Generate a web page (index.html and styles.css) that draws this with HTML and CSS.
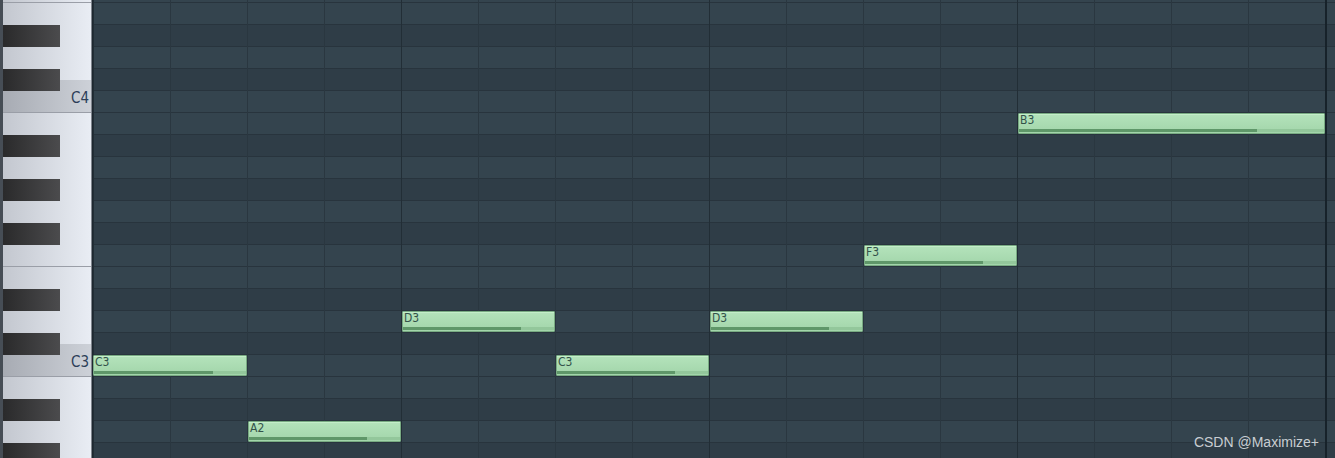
FILE: index.html
```html
<!DOCTYPE html>
<html lang="en">
<head>
  <meta charset="UTF-8">
  <meta name="viewport" content="width=device-width, initial-scale=1.0">
  <title>Piano Roll</title>
  <link rel="stylesheet" href="styles.css">
</head>
<body>
  <div class="roll">
    <!-- keyboard, F4 at the top down to G#2 -->
    <div class="keys">
      <div class="key edge"></div>
      <div class="key"></div>
      <div class="key black"><span class="bk"></span></div>
      <div class="key"></div>
      <div class="key black cs"><span class="bk"></span></div>
      <div class="key c edge"><span class="label">C4</span></div>
      <div class="key"></div>
      <div class="key black"><span class="bk"></span></div>
      <div class="key"></div>
      <div class="key black"><span class="bk"></span></div>
      <div class="key"></div>
      <div class="key black"><span class="bk"></span></div>
      <div class="key edge"></div>
      <div class="key"></div>
      <div class="key black"><span class="bk"></span></div>
      <div class="key"></div>
      <div class="key black cs"><span class="bk"></span></div>
      <div class="key c edge"><span class="label">C3</span></div>
      <div class="key"></div>
      <div class="key black"><span class="bk"></span></div>
      <div class="key"></div>
      <div class="key black"><span class="bk"></span></div>
    </div>

    <div class="canvas">
      <div class="rows">
        <div class="row"></div>
        <div class="row"></div>
        <div class="row dark"></div>
        <div class="row"></div>
        <div class="row dark"></div>
        <div class="row"></div>
        <div class="row"></div>
        <div class="row dark"></div>
        <div class="row"></div>
        <div class="row dark"></div>
        <div class="row"></div>
        <div class="row dark"></div>
        <div class="row"></div>
        <div class="row"></div>
        <div class="row dark"></div>
        <div class="row"></div>
        <div class="row dark"></div>
        <div class="row"></div>
        <div class="row"></div>
        <div class="row dark"></div>
        <div class="row"></div>
        <div class="row dark"></div>
      </div>

      <!-- grid-area: pitch row / start beat / span 1 / length in beats -->
      <div class="notes">
        <div class="note first" style="grid-area: 18 / 1 / span 1 / span 2"><span class="name">C3</span><span class="vel"></span></div>
        <div class="note" style="grid-area: 21 / 3 / span 1 / span 2"><span class="name">A2</span><span class="vel"></span></div>
        <div class="note" style="grid-area: 16 / 5 / span 1 / span 2"><span class="name">D3</span><span class="vel"></span></div>
        <div class="note" style="grid-area: 18 / 7 / span 1 / span 2"><span class="name">C3</span><span class="vel"></span></div>
        <div class="note" style="grid-area: 16 / 9 / span 1 / span 2"><span class="name">D3</span><span class="vel"></span></div>
        <div class="note" style="grid-area: 13 / 11 / span 1 / span 2"><span class="name">F3</span><span class="vel"></span></div>
        <div class="note" style="grid-area: 7 / 13 / span 1 / span 4"><span class="name">B3</span><span class="vel"></span></div>
      </div>
    </div>
  </div>

  <div class="watermark">CSDN @Maximize+</div>
</body>
</html>
```

FILE: styles.css
```css
body {
  margin: 0;
  height: 458px;
  overflow: hidden;
  background: #34444e;
  font-family: "Liberation Sans", Arial, sans-serif;
}
.roll {
  display: flex;
  margin-top: -19px;
}

/* keyboard */
.keys {
  flex: none;
  width: 88px;
  border-left: 3px solid #464d55;
  border-right: 1px solid #80868e;
  display: flex;
  flex-direction: column;
}
.key {
  height: 22px;
  display: flex;
  justify-content: flex-end;
  align-items: flex-start;
  background: linear-gradient(90deg, #c3c7cf, #e9edf4);
}
.key.c {
  background: linear-gradient(90deg, #a7abb3, #cdd1d8);
}
.key.cs {
  background:
    linear-gradient(90deg, #a7abb3, #cdd1d8) bottom / 100% 11px no-repeat,
    linear-gradient(90deg, #c3c7cf, #e9edf4);
}
.key.edge {
  box-shadow: inset 0 -1px #9a9ea7;
}
.key.black {
  justify-content: flex-start;
}
.bk {
  width: 57px;
  height: 22px;
  background: linear-gradient(90deg, #2a2a2b, #4b4b4d);
}
.label {
  font-family: "Liberation Sans Narrow", "DejaVu Sans Condensed", sans-serif;
  font-size: 15px;
  line-height: 14px;
  margin-top: 0;
  padding-right: 2px;
  color: #2c3e58;
}

/* note grid */
.canvas {
  flex: 1;
  display: grid;
  border-left: 1px solid #1e2830;
}
.rows, .notes {
  grid-area: 1 / 1;
}
.row {
  height: 22px;
  background:
    linear-gradient(90deg, transparent 1232px, #17222a 1232px 1234px, transparent 1234px),
    repeating-linear-gradient(90deg, #222e36 0 1px, transparent 1px 308px),
    repeating-linear-gradient(90deg, #2a3740 0 1px, transparent 1px 77px),
    linear-gradient(to top, #28343d 1px, transparent 1px);
  background-color: #34444e;
}
.row.dark {
  background-color: #2f3d47;
}
.notes {
  display: grid;
  grid-template-columns: repeat(16, 77px);
  grid-template-rows: repeat(22, 22px);
}
.note {
  margin: 0 0 1px 1px;
  border: 1px solid #78aa82;
  border-radius: 1px;
  background: linear-gradient(#b4e3bb, #a2d5aa);
  box-shadow: inset 0 1px #c4eec9;
  display: flex;
  flex-direction: column;
  justify-content: space-between;
  min-width: 0;
}
.note.first {
  margin-left: 0;
}
.name {
  font-family: "Liberation Sans Narrow", "DejaVu Sans Condensed", sans-serif;
  font-size: 12px;
  line-height: 11px;
  padding: 1px 0 0 1px;
  color: #33524a;
}
.vel {
  height: 3px;
  margin-bottom: 1px;
  background: linear-gradient(90deg, #5f9769 78%, #93c79b 78%);
}

.watermark {
  position: absolute;
  right: 16px;
  bottom: 8px;
  font-size: 14px;
  color: #c8cdd2;
}
```
